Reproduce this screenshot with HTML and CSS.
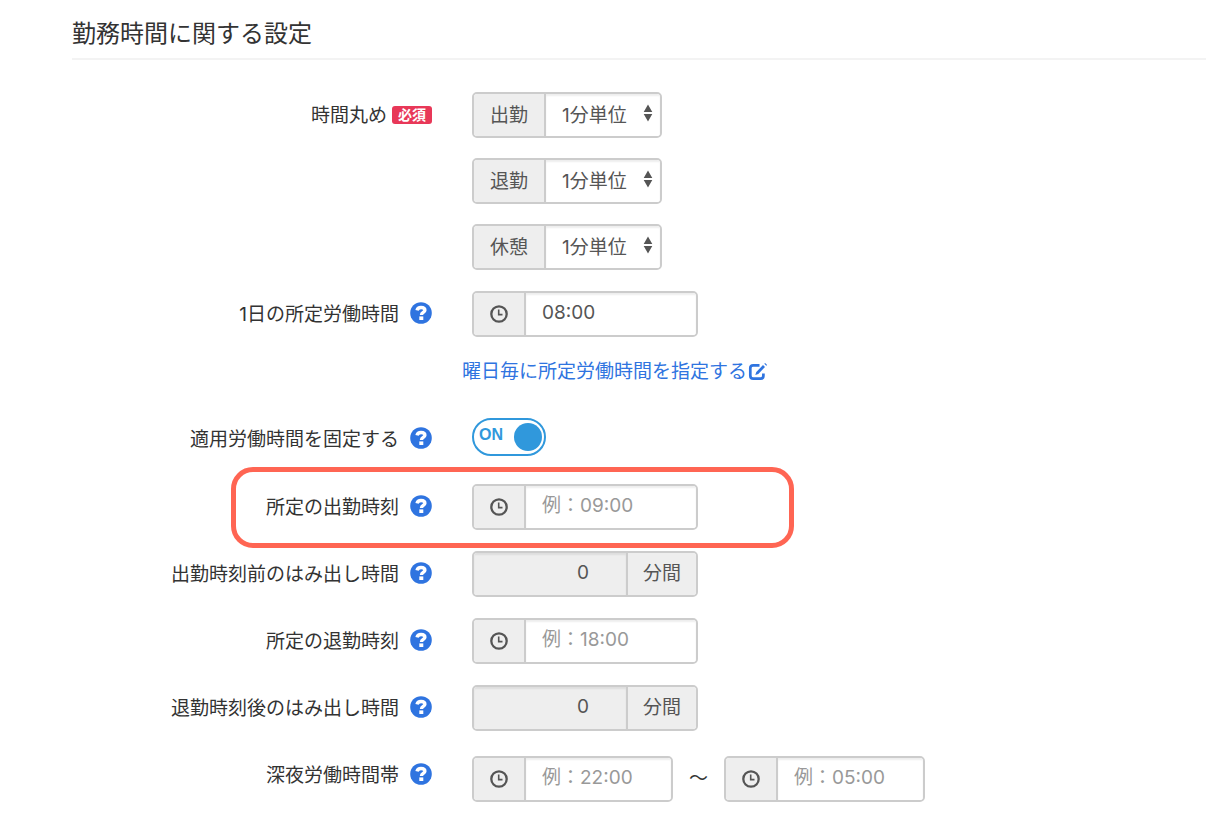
FILE: index.html
```html
<!DOCTYPE html>
<html lang="ja">
<head>
<meta charset="utf-8">
<meta name="viewport" content="width=device-width, initial-scale=1">
<title>勤務時間に関する設定</title>
<link rel="stylesheet" href="styles.css">
</head>
<body>
<svg width="0" height="0" class="sprite" aria-hidden="true">
  <symbol id="i-help" viewBox="0 0 22 22">
    <circle cx="11" cy="11" r="10.8" fill="currentColor"/>
    <path d="M7 8.400C7.500 6.400 8.900 5.500 11 5.500c2.300 0 3.900 1.100 3.900 2.800 0 2.100-3.400 2.300-3.400 4.600" fill="none" stroke="#fff" stroke-width="3.400"/>
    <path d="M9.300 14.400h4v3.600h-4z" fill="#fff"/>
  </symbol>
  <symbol id="i-clock" viewBox="0 0 18 18">
    <circle cx="9" cy="9" r="7.700" fill="none" stroke="currentColor" stroke-width="2.300"/>
    <path d="M8.700 4.600v5h3.800" fill="none" stroke="currentColor" stroke-width="1.600"/>
  </symbol>
  <symbol id="i-sort" viewBox="0 0 10 18">
    <path d="M5 0.500L9.300 8H.7zM.7 10h8.600L5 17.500z" fill="currentColor"/>
  </symbol>
  <symbol id="i-edit" viewBox="0 0 20 18">
    <path d="M11.500 2.300H5.200Q2.300 2.300 2.300 5v7.500q0 3.200 2.900 3.200h7.300q2.900 0 2.900-3.200V10.500" fill="none" stroke="currentColor" stroke-width="2.700"/>
    <path d="M15 2l2 2-6.700 6.900-3 1 1-3zM16.300.8l.8-.8 2 2-.8.8z" fill="currentColor"/>
  </symbol>
</svg>

<main class="page">
  <h1 class="title">勤務時間に関する設定</h1>
  <form class="form">
    <div class="row row-top">
      <div class="label"><span class="name">時間丸め</span><span class="badge">必須</span></div>
      <div class="stack">
        <div class="group">
          <label class="addon" for="round-in">出勤</label>
          <span class="picker"><select id="round-in"><option>1分単位</option></select><svg class="sort"><use href="#i-sort"/></svg></span>
        </div>
        <div class="group">
          <label class="addon" for="round-out">退勤</label>
          <span class="picker"><select id="round-out"><option>1分単位</option></select><svg class="sort"><use href="#i-sort"/></svg></span>
        </div>
        <div class="group">
          <label class="addon" for="round-break">休憩</label>
          <span class="picker"><select id="round-break"><option>1分単位</option></select><svg class="sort"><use href="#i-sort"/></svg></span>
        </div>
      </div>
    </div>

    <div class="row">
      <div class="label"><label class="name" for="daily">1日の所定労働時間</label><button type="button" class="help" aria-label="ヘルプ"><svg><use href="#i-help"/></svg></button></div>
      <div class="group group-wide">
        <span class="addon addon-icon"><svg><use href="#i-clock"/></svg></span>
        <input id="daily" class="field" type="text" value="08:00">
      </div>
    </div>

    <div class="link-row">
      <a class="link" href="#weekday">曜日毎に所定労働時間を指定する<svg><use href="#i-edit"/></svg></a>
    </div>

    <div class="row row-toggle">
      <div class="label"><label class="name" for="fixed">適用労働時間を固定する</label><button type="button" class="help" aria-label="ヘルプ"><svg><use href="#i-help"/></svg></button></div>
      <label class="toggle"><input id="fixed" type="checkbox" checked><span class="toggle-text">ON</span><span class="knob"></span></label>
    </div>

    <div class="row row-marked">
      <div class="label"><label class="name" for="start">所定の出勤時刻</label><button type="button" class="help" aria-label="ヘルプ"><svg><use href="#i-help"/></svg></button></div>
      <div class="group group-wide">
        <span class="addon addon-icon"><svg><use href="#i-clock"/></svg></span>
        <input id="start" class="field" type="text" placeholder="例：09:00">
      </div>
      <span class="mark"></span>
    </div>

    <div class="row">
      <div class="label"><label class="name" for="before">出勤時刻前のはみ出し時間</label><button type="button" class="help" aria-label="ヘルプ"><svg><use href="#i-help"/></svg></button></div>
      <div class="group group-wide">
        <input id="before" class="field field-off" type="text" value="0" disabled>
        <span class="addon addon-end">分間</span>
      </div>
    </div>

    <div class="row">
      <div class="label"><label class="name" for="end">所定の退勤時刻</label><button type="button" class="help" aria-label="ヘルプ"><svg><use href="#i-help"/></svg></button></div>
      <div class="group group-wide">
        <span class="addon addon-icon"><svg><use href="#i-clock"/></svg></span>
        <input id="end" class="field" type="text" placeholder="例：18:00">
      </div>
    </div>

    <div class="row">
      <div class="label"><label class="name" for="after">退勤時刻後のはみ出し時間</label><button type="button" class="help" aria-label="ヘルプ"><svg><use href="#i-help"/></svg></button></div>
      <div class="group group-wide">
        <input id="after" class="field field-off" type="text" value="0" disabled>
        <span class="addon addon-end">分間</span>
      </div>
    </div>

    <div class="row row-top">
      <div class="label"><label class="name" for="night-from">深夜労働時間帯</label><button type="button" class="help" aria-label="ヘルプ"><svg><use href="#i-help"/></svg></button></div>
      <div class="range">
        <div class="group group-range">
          <span class="addon addon-icon"><svg><use href="#i-clock"/></svg></span>
          <input id="night-from" class="field" type="text" placeholder="例：22:00">
        </div>
        <span>〜</span>
        <div class="group group-range">
          <span class="addon addon-icon"><svg><use href="#i-clock"/></svg></span>
          <input class="field" type="text" placeholder="例：05:00" aria-label="深夜労働時間帯の終了">
        </div>
      </div>
    </div>
  </form>
</main>
</body>
</html>
```
FILE: styles.css
```css
* {
  box-sizing: border-box;
}

body {
  margin: 0;
  background: #fff;
  color: #333;
  font: 400 19px/26px Inter, "Noto Sans CJK JP", sans-serif;
}

input,
select,
button {
  font: inherit;
  color: inherit;
}

.sprite {
  display: block;
}

.page {
  padding: 16px 0 32px 72px;
}

.title {
  margin: 0;
  padding-bottom: 6px;
  border-bottom: 2px solid #f3f3f3;
  font-size: 24px;
  font-weight: 400;
  line-height: 36px;
}

.form {
  display: flex;
  flex-direction: column;
  gap: 21px;
  padding-top: 32px;
}

.row {
  display: grid;
  grid-template-columns: 360px 1fr;
  column-gap: 40px;
  align-items: center;
}

.row-top {
  align-items: start;
}

.row-top .label {
  min-height: 46px;
}

.label {
  display: flex;
  align-items: center;
  justify-content: flex-end;
  white-space: nowrap;
}

.name {
  padding-top: 1px;
}

.badge {
  margin-left: 5px;
  padding: 0 6px;
  border-radius: 3px;
  background: #e83858;
  color: #fff;
  font-size: 14px;
  font-weight: 700;
  line-height: 18px;
}

.help {
  display: flex;
  margin: 0 0 2px 11px;
  padding: 0;
  border: 0;
  background: none;
  color: #2f74e0;
}

.help svg {
  width: 22px;
  height: 22px;
}

.stack {
  display: flex;
  flex-direction: column;
  align-items: flex-start;
  gap: 20px;
}

.group {
  display: flex;
  height: 46px;
  border: 2px solid #ccc;
  border-radius: 5px;
  overflow: hidden;
  color: #555;
}

.group-wide {
  width: 226px;
}

.group-range {
  width: 201px;
}

.addon {
  display: flex;
  flex: none;
  align-items: center;
  padding: 2px 16px 0;
  border-right: 2px solid #ccc;
  background: #eee;
}

.addon-icon {
  width: 52px;
  padding-top: 0;
}

.addon-icon svg {
  width: 18px;
  height: 18px;
}

.addon-end {
  padding: 0 15px;
  border-right: 0;
  border-left: 2px solid #ccc;
}

.field {
  flex: 1;
  min-width: 0;
  padding: 0 16px 2px;
  border: 0;
  border-radius: 0;
  background: #fff;
  box-shadow: inset 0 2px 2px rgba(0, 0, 0, 0.07);
}

.field::placeholder {
  color: #999;
  opacity: 1;
}

.field-off {
  padding-right: 37px;
  background: #eee;
  text-align: right;
}

.picker {
  position: relative;
  display: flex;
  width: 114px;
}

.picker select {
  flex: 1;
  padding: 2px 16px 0;
  border: 0;
  appearance: none;
  background: #fff;
  box-shadow: inset 0 2px 2px rgba(0, 0, 0, 0.07);
}

.sort {
  position: absolute;
  top: 10px;
  right: 7px;
  width: 10px;
  height: 18px;
  pointer-events: none;
}

.link-row {
  padding-left: 390px;
}

.link {
  display: inline-flex;
  align-items: center;
  gap: 1px;
  padding-top: 1px;
  color: #2f74e0;
  text-decoration: none;
}

.link svg {
  width: 20px;
  height: 18px;
}

.row-toggle {
  padding: 12px 0 7px;
}

.row-toggle .label {
  padding-top: 4px;
}

.toggle {
  display: flex;
  align-items: center;
  justify-content: space-between;
  width: 74px;
  height: 38px;
  padding: 0 2px 0 5px;
  border: 2px solid #3098dc;
  border-radius: 19px;
  color: #3098dc;
}

.toggle input {
  position: absolute;
  opacity: 0;
}

.toggle-text {
  padding-bottom: 4px;
  font: 700 16px/30px "Liberation Sans", Arial, sans-serif;
}

.knob {
  width: 28px;
  height: 28px;
  border-radius: 50%;
  background: #3098dc;
}

.row-marked {
  position: relative;
}

.mark {
  position: absolute;
  top: -17px;
  bottom: -18px;
  left: 159px;
  width: 563px;
  border: 5px solid #ff6553;
  border-radius: 22px;
  pointer-events: none;
}

.range {
  display: flex;
  align-items: center;
  gap: 16px;
  padding-top: 4px;
}
```
